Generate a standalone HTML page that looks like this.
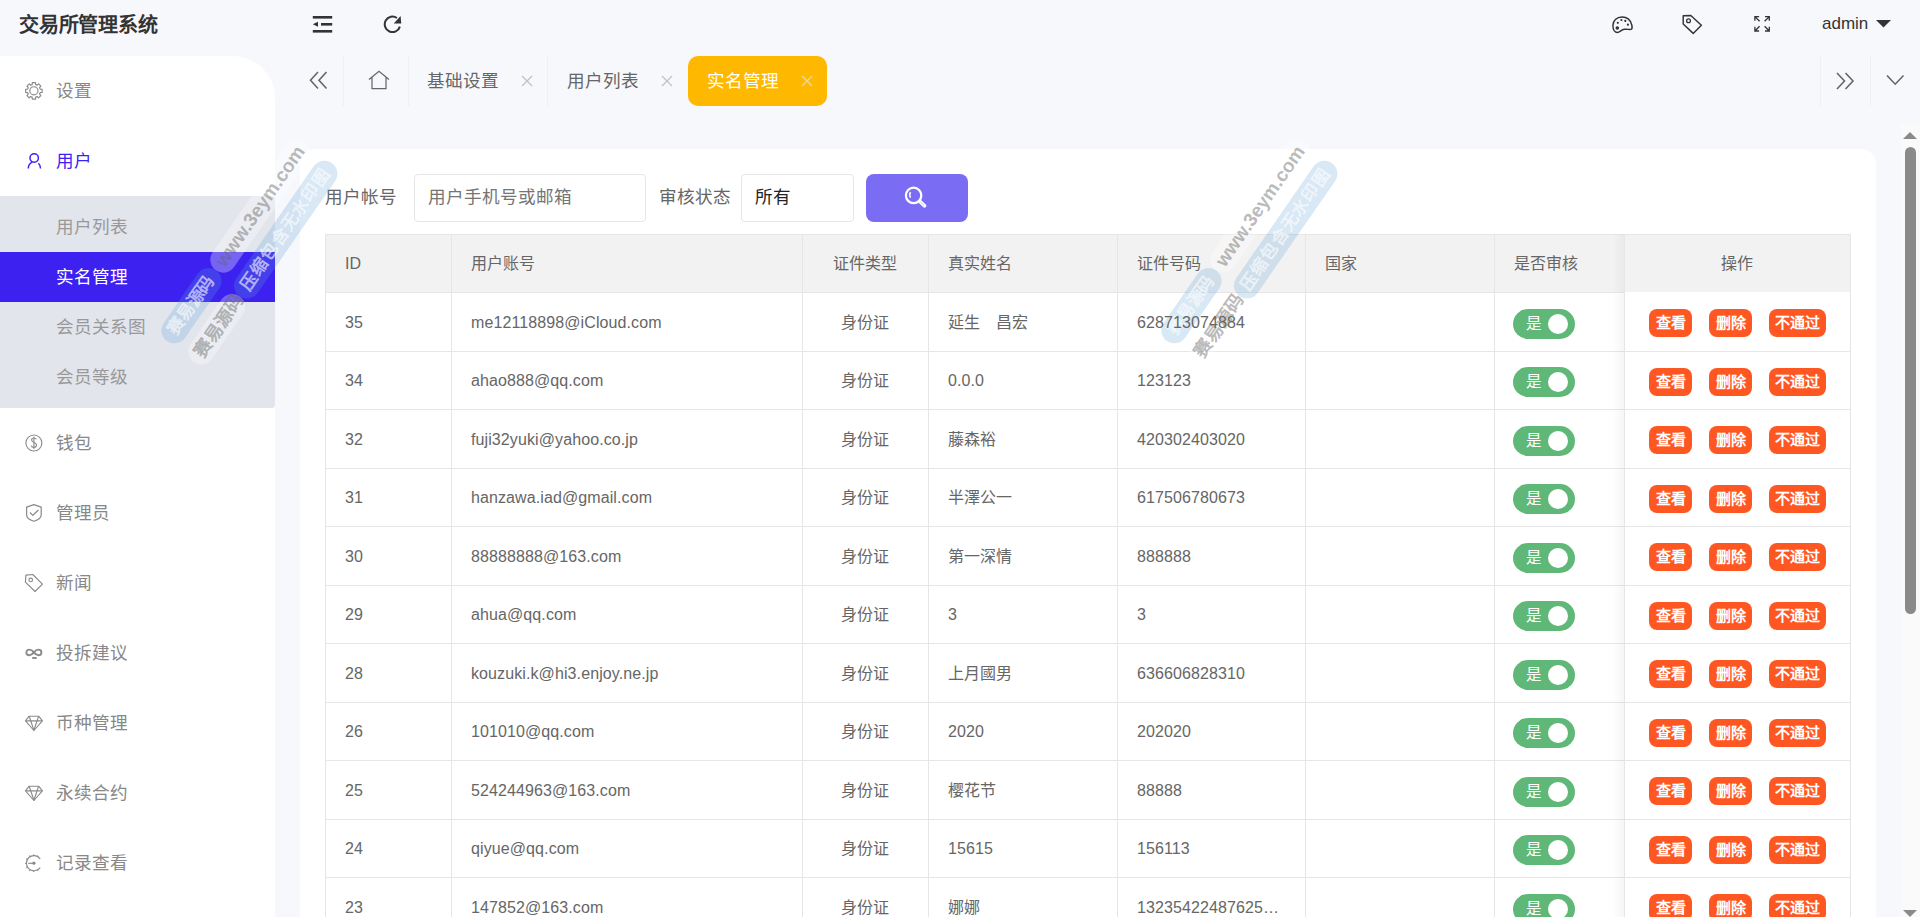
<!DOCTYPE html>
<html lang="zh-CN"><head><meta charset="utf-8"><title>交易所管理系统</title>
<style>
*{margin:0;padding:0;box-sizing:border-box}
html,body{width:1920px;height:917px;overflow:hidden;background:#f7f8fc;font-family:"Liberation Sans",sans-serif;color:#666}
.abs{position:absolute}
#title{position:absolute;left:19px;top:11px;font-size:20px;font-weight:bold;color:#333;line-height:28px;letter-spacing:-0.2px}
#side{position:absolute;left:0;top:56px;width:275px;height:900px;background:#fff;border-top-right-radius:42px}
.mi{position:absolute;left:56px;font-size:17.6px;line-height:24px;color:#888;white-space:nowrap}
.mi.act{color:#3c21f1}
.mico{position:absolute;left:24px;width:20px;height:20px}
#sub{position:absolute;left:0;top:196px;width:275px;height:212px;background:#e3e5ed;border-radius:0 3px 3px 0}
#subsel{position:absolute;left:0;top:252px;width:275px;height:50px;background:#3c21f1}
.si{position:absolute;left:56px;font-size:17.6px;line-height:24px;color:#999;white-space:nowrap}
.si.sel{color:#fff}
.tab{position:absolute;top:56px;height:50px;line-height:50px;font-size:17.6px;color:#666;white-space:nowrap}
.sep{position:absolute;top:56px;width:1px;height:50px;background:#eff0f5}
.x{position:absolute;top:74px;width:14px;height:14px}
#acttab{position:absolute;left:688px;top:56px;width:139px;height:50px;background:#ffb800;border-radius:10px}
#card{position:absolute;left:300px;top:149px;width:1576px;height:800px;background:#fff;border-radius:15px 15px 0 0}
.lbl{position:absolute;top:185px;font-size:17.6px;line-height:24px;color:#666;white-space:nowrap}
.inp{position:absolute;top:174px;height:48px;border:1px solid #e6e6e6;border-radius:4px;background:#fff}
.inp span{position:absolute;left:13px;top:10px;font-size:17.6px;line-height:24px;white-space:nowrap}
#sbtn{position:absolute;left:866px;top:174px;width:102px;height:48px;background:#7b6cf4;border-radius:8px}
.hbg{position:absolute;left:325px;width:1526px;background:#f2f2f2}
.hl{position:absolute;left:325px;width:1526px;height:1px;background:#e6e6e6}
.vl{position:absolute;top:234px;width:1px;height:700px;background:#e6e6e6}
.opshadow{position:absolute;left:1612px;top:234px;width:12px;height:700px;background:linear-gradient(to right,rgba(0,0,0,0),rgba(0,0,0,0.035))}
.th,.td{position:absolute;font-size:16px;letter-spacing:0.1px;line-height:30px;color:#666;white-space:nowrap;overflow:hidden}
.c{text-align:center}
.sw{position:absolute;left:1513px;width:62px;height:30px;border-radius:15px;background:#5fb878}
.sw span{position:absolute;left:13px;top:0;line-height:30px;font-size:15.5px;color:#fff}
.sw i{position:absolute;left:35px;top:5px;width:20px;height:20px;border-radius:50%;background:#fff}
.bt{position:absolute;height:28px;border-radius:8px;background:#ff5722;color:#fff;font-size:15px;font-weight:bold;line-height:28px;text-align:center;white-space:nowrap}
#sbar{position:absolute;left:1901px;top:124px;width:19px;height:800px;background:#fafafa}
#thumb{position:absolute;left:1905px;top:147px;width:11px;height:467px;border-radius:6px;background:#8a8a8a}
.wm{position:absolute;transform-origin:0 50%;white-space:nowrap;font-weight:bold}
.wm{position:absolute;height:26px;transform-origin:0 50%;transform:rotate(-55.3deg);white-space:nowrap;font-weight:bold;display:flex;pointer-events:none}
.wm span{display:block;height:26px;line-height:26px;text-align:center;border-radius:13px;font-size:17px}
.pb{background:rgba(90,160,215,0.24);color:rgba(255,255,255,0.6)}
.pw{background:rgba(255,255,255,0.3);color:rgba(100,100,100,0.45)}

</style></head><body>
<div id="title">交易所管理系统</div>
<!-- header icons -->
<svg class="abs" style="left:312px;top:15px" width="22" height="19" viewBox="0 0 22 19">
 <rect x="0.8" y="1" width="19.4" height="2.6" fill="#333"/>
 <rect x="9" y="8" width="11.2" height="2.6" fill="#333"/>
 <rect x="0.8" y="15" width="19.4" height="2.6" fill="#333"/>
 <path d="M0.8 9.3 L6 6.8 L6 11.8 Z" fill="#333"/>
</svg>
<svg class="abs" style="left:383px;top:15px" width="20" height="20" viewBox="0 0 20 20">
 <path d="M13.95 3.0 A7.75 7.75 0 1 0 16.9 11.6" fill="none" stroke="#333" stroke-width="2"/>
 <path d="M17.6 0.9 L18.25 8.4 L10.75 8.4 Z" fill="#333"/>
</svg>
<!-- right icons -->
<svg class="abs" style="left:1611px;top:15px" width="23" height="20" viewBox="0 0 23 20">
 <path d="M11 2 C5.5 2 1.9 5.8 1.9 10.5 C1.9 15.3 4.3 17.4 6.4 17.4 C8.9 17.4 10 14.6 13.5 14.3 C16.5 14 19.3 15 20.5 14.2 C21.3 13.6 21.2 11.5 20.7 9.7 C19.5 5.2 16 2 11 2 Z" fill="none" stroke="#333" stroke-width="1.45"/>
 <circle cx="6.3" cy="13" r="1.8" fill="#333"/>
 <circle cx="6.8" cy="7.8" r="1.1" fill="#333"/>
 <circle cx="10.4" cy="5.0" r="1.1" fill="#333"/>
 <circle cx="14.3" cy="5.9" r="1.1" fill="#333"/>
 <circle cx="16.9" cy="9.7" r="1.1" fill="#333"/>
</svg>
<svg class="abs" style="left:1681px;top:14px" width="23" height="22" viewBox="0 0 23 22">
 <path d="M2.2 1.7 L9.8 1.5 L20.4 11.3 L12.2 19.4 L2.2 10 Z" fill="none" stroke="#333" stroke-width="1.45" stroke-linejoin="round"/>
 <circle cx="7.5" cy="6.8" r="1.9" fill="none" stroke="#333" stroke-width="1.3"/>
</svg>
<svg class="abs" style="left:1753px;top:15px" width="18" height="18" viewBox="0 0 18 18">
 <g fill="none" stroke="#333" stroke-width="1.3">
 <path d="M1.9 5.8 V1.6 H6.1 M1.9 1.6 L6.6 6.3"/>
 <path d="M12 1.6 H16.3 V5.8 M16.3 1.6 L11.6 6.3"/>
 <path d="M1.9 11.8 V16 H6.1 M1.9 16 L6.6 11.3"/>
 <path d="M16.3 11.8 V16 H12 M16.3 16 L11.6 11.3"/>
 </g>
</svg>
<div class="abs" style="left:1822px;top:12px;font-size:17px;line-height:24px;color:#333">admin</div>
<svg class="abs" style="left:1876px;top:20px" width="16" height="8" viewBox="0 0 16 8"><path d="M0 0 H15 L7.5 7.5Z" fill="#333"/></svg>

<!-- sidebar -->
<div id="side"></div>
<div id="sub"></div>
<div id="subsel"></div>
<div class="mi" style="top:79px">设置</div>
<div class="mi act" style="top:149px">用户</div>
<div class="si" style="top:215px">用户列表</div>
<div class="si sel" style="top:265px">实名管理</div>
<div class="si" style="top:315px">会员关系图</div>
<div class="si" style="top:365px">会员等级</div>
<div class="mi" style="top:431px">钱包</div>
<div class="mi" style="top:501px">管理员</div>
<div class="mi" style="top:571px">新闻</div>
<div class="mi" style="top:641px">投拆建议</div>
<div class="mi" style="top:711px">币种管理</div>
<div class="mi" style="top:781px">永续合约</div>
<div class="mi" style="top:851px">记录查看</div>
<svg class="abs" style="left:20px;top:76px" width="28" height="28" viewBox="0 0 28 28"><g fill="none" stroke="#8a8a8a" stroke-width="1.15" stroke-linejoin="round">
<path d="M11.41 8.84 L12.17 8.59 L12.31 6.60 L15.49 6.60 L15.63 8.59 L16.39 8.84 L17.10 9.19 L18.61 7.90 L20.85 10.14 L19.56 11.65 L19.91 12.36 L20.16 13.12 L22.15 13.26 L22.15 16.44 L20.16 16.58 L19.91 17.34 L19.56 18.05 L20.85 19.56 L18.61 21.80 L17.10 20.51 L16.39 20.86 L15.63 21.11 L15.49 23.10 L12.31 23.10 L12.17 21.11 L11.41 20.86 L10.70 20.51 L9.19 21.80 L6.95 19.56 L8.24 18.05 L7.89 17.34 L7.64 16.58 L5.65 16.44 L5.65 13.26 L7.64 13.12 L7.89 12.36 L8.24 11.65 L6.95 10.14 L9.19 7.90 L10.70 9.19 Z"/>
<circle cx="13.9" cy="14.8" r="4.1"/></g></svg>
<svg class="abs" style="left:20px;top:147px" width="28" height="28" viewBox="0 0 28 28"><g fill="none" stroke="#3c21f1" stroke-width="1.5">
<circle cx="14.2" cy="11" r="4.2"/>
<path d="M8.3 21.6 C8.3 18.5 9.8 16.2 12.2 15.1"/>
<path d="M18.4 16.3 C19.8 17.5 20.5 19.3 20.5 21.6"/></g></svg>
<svg class="abs" style="left:20px;top:429px" width="28" height="28" viewBox="0 0 28 28"><g fill="none" stroke="#8a8a8a" stroke-width="1.1">
<circle cx="13.9" cy="14" r="8"/>
<path d="M16.4 10.4 C16 9.4 15.1 9 14 9 C12.6 9 11.6 9.8 11.6 11 C11.6 12.4 12.8 12.9 14 13.4 C15.4 13.9 16.5 14.6 16.5 16.1 C16.5 17.5 15.3 18.4 13.9 18.4 C12.5 18.4 11.5 17.6 11.2 16.6"/>
<path d="M13.9 7.8 V20"/></g></svg>
<svg class="abs" style="left:20px;top:499px" width="28" height="28" viewBox="0 0 28 28"><g fill="none" stroke="#8a8a8a" stroke-width="1.2" stroke-linejoin="round">
<path d="M13.9 5.6 L21.2 8.1 V15.8 C21.2 19 17.5 21.2 13.9 22.3 C10.3 21.2 6.6 19 6.6 15.8 V8.1 Z"/>
<path d="M10 13.5 L12.8 16.3 L18.5 11"/></g></svg>
<svg class="abs" style="left:20px;top:569px" width="28" height="28" viewBox="0 0 28 28"><g fill="none" stroke="#8a8a8a" stroke-width="1.15" stroke-linejoin="round">
<path d="M5.9 6.1 L12.8 5.5 L22.4 15.1 L15 22.5 L5.4 13.2 Z"/>
<circle cx="10.7" cy="10.9" r="1.8"/></g></svg>
<svg class="abs" style="left:20px;top:639px" width="28" height="28" viewBox="0 0 28 28"><g fill="none" stroke="#8a8a8a" stroke-width="1.9">
<path d="M13.9 13.4 C12.5 11.6 11.3 10.6 9.3 10.6 C7.6 10.6 6.4 11.8 6.4 13.4 C6.4 15 7.6 16.2 9.3 16.2 C11.3 16.2 12.5 15.2 13.9 13.4 C15.3 11.6 16.5 10.6 18.5 10.6 C20.2 10.6 21.4 11.8 21.4 13.4 C21.4 15 20.2 16.2 18.5 16.2 C16.5 16.2 15.3 15.2 13.9 13.4 Z"/>
<path d="M12.2 19 H16.7"/></g></svg>
<svg class="abs" style="left:20px;top:709px" width="28" height="28" viewBox="0 0 28 28"><g fill="none" stroke="#8a8a8a" stroke-width="1.1" stroke-linejoin="round">
<path d="M8.9 7.3 H18.9 L22.4 11.9 L13.9 21.5 L5.5 11.9 Z"/>
<path d="M5.5 11.9 H22.4 M9.2 7.3 L13.9 21.2 L18.6 7.3"/></g></svg>
<svg class="abs" style="left:20px;top:779px" width="28" height="28" viewBox="0 0 28 28"><g fill="none" stroke="#8a8a8a" stroke-width="1.1" stroke-linejoin="round">
<path d="M8.9 7.3 H18.9 L22.4 11.9 L13.9 21.5 L5.5 11.9 Z"/>
<path d="M5.5 11.9 H22.4 M9.2 7.3 L13.9 21.2 L18.6 7.3"/></g></svg>
<svg class="abs" style="left:20px;top:849px" width="28" height="28" viewBox="0 0 28 28"><g fill="none" stroke="#8a8a8a" stroke-width="1.15">
<path d="M20.2 9.8 A7.6 7.6 0 1 0 20.2 18.6"/>
<path d="M13.6 5.6 V7 M9.4 6.5 L10 7.6 M6.3 9.6 L7.3 10.2 M5.2 14.3 H6.6 M6.3 18.8 L7.3 18.2 M9.4 21.9 L10 20.8 M13.6 22.8 V21.4 M17.9 21.8 L17.3 20.8 M18 6.6 L17.4 7.6"/>
<path d="M8.2 14.3 H13.2"/></g>
<circle cx="13.9" cy="14.2" r="1.6" fill="#8a8a8a"/></svg>


<!-- tabs -->
<svg class="abs" style="left:309px;top:71px" width="19" height="19" viewBox="0 0 19 19">
 <path d="M9 1 L1.5 9.2 L9 17.5 M17.5 1 L10 9.2 L17.5 17.5" fill="none" stroke="#666" stroke-width="1.6"/>
</svg>
<div class="sep" style="left:343px"></div>
<svg class="abs" style="left:368px;top:70px" width="22" height="20" viewBox="0 0 22 20">
 <path d="M1 9.5 L11 1.2 L21 9.5 M4 7.5 V18.5 H18 V7.5" fill="none" stroke="#666" stroke-width="1.25"/>
</svg>
<div class="sep" style="left:408px"></div>
<div class="tab" style="left:427px">基础设置</div>
<svg class="x" style="left:520px" viewBox="0 0 14 14"><path d="M2 2 L12 12 M12 2 L2 12" stroke="#c2c2c2" stroke-width="1.3"/></svg>
<div class="sep" style="left:547px"></div>
<div class="tab" style="left:567px">用户列表</div>
<svg class="x" style="left:660px" viewBox="0 0 14 14"><path d="M2 2 L12 12 M12 2 L2 12" stroke="#c2c2c2" stroke-width="1.3"/></svg>
<div id="acttab"></div>
<div class="tab" style="left:707px;color:#fff">实名管理</div>
<svg class="x" style="left:800px" viewBox="0 0 14 14"><path d="M2 2 L12 12 M12 2 L2 12" stroke="#e8d9a8" stroke-width="1.3"/></svg>
<div class="sep" style="left:1820px"></div>
<svg class="abs" style="left:1836px;top:72px" width="19" height="18" viewBox="0 0 19 18">
 <path d="M1 1 L8.5 9 L1 17 M9.5 1 L17 9 L9.5 17" fill="none" stroke="#666" stroke-width="1.6"/>
</svg>
<div class="sep" style="left:1870px"></div>
<svg class="abs" style="left:1886px;top:74px" width="19" height="12" viewBox="0 0 19 12">
 <path d="M1 1.5 L9.2 10.2 L17.5 1.5" fill="none" stroke="#666" stroke-width="1.6"/>
</svg>

<!-- card -->
<div id="card"></div>
<div class="lbl" style="left:325px">用户帐号</div>
<div class="inp" style="left:414px;width:232px"><span style="color:#757575">用户手机号或邮箱</span></div>
<div class="lbl" style="left:659px">审核状态</div>
<div class="inp" style="left:741px;width:113px"><span style="color:#222">所有</span></div>
<div id="sbtn"></div>
<svg class="abs" style="left:902px;top:184px" width="26" height="26" viewBox="0 0 26 26">
 <circle cx="11.6" cy="11.4" r="7.7" fill="none" stroke="#fff" stroke-width="2.3"/>
 <path d="M8.6 8.3 A4.6 4.6 0 0 0 8.6 13.6" fill="none" stroke="#fff" stroke-width="1.5"/>
 <path d="M17.8 17.4 L22.6 21.8" stroke="#fff" stroke-width="3.6" stroke-linecap="round"/>
 <path d="M18.6 18.2 L21.9 21.1" stroke="#c9c2fa" stroke-width="0.9" stroke-linecap="round"/>
</svg>
<div class="hbg" style="top:234px;height:58.4px"></div>
<div class="hl" style="top:234.0px"></div>
<div class="hl" style="top:292.4px;width:1299px"></div>
<div class="hl" style="top:350.9px"></div>
<div class="hl" style="top:409.4px"></div>
<div class="hl" style="top:467.9px"></div>
<div class="hl" style="top:526.4px"></div>
<div class="hl" style="top:584.9px"></div>
<div class="hl" style="top:643.4px"></div>
<div class="hl" style="top:701.9px"></div>
<div class="hl" style="top:760.4px"></div>
<div class="hl" style="top:818.9px"></div>
<div class="hl" style="top:877.4px"></div>
<div class="hl" style="top:935.9px"></div>
<div class="vl" style="left:325px"></div>
<div class="vl" style="left:451px"></div>
<div class="vl" style="left:802px"></div>
<div class="vl" style="left:928px"></div>
<div class="vl" style="left:1117px"></div>
<div class="vl" style="left:1305px"></div>
<div class="vl" style="left:1494px"></div>
<div class="vl" style="left:1624px"></div>
<div class="vl" style="left:1850px"></div>
<div class="opshadow"></div>
<div class="wm" style="left:167px;top:328px"><span class="pb" style="width:86px">赛易源码</span><span class="pw" style="width:156px;font-size:19px;font-family:'Liberation Sans',sans-serif">www.3eym.com</span></div>
<div class="wm" style="left:194px;top:349px"><span class="pw" style="width:80px;padding-left:8px;font-size:18px">赛易源码</span><span class="pb" style="width:162px;letter-spacing:1px">压缩包含无水印图</span></div>
<div class="wm" style="left:1167px;top:328px"><span class="pb" style="width:86px">赛易源码</span><span class="pw" style="width:156px;font-size:19px;font-family:'Liberation Sans',sans-serif">www.3eym.com</span></div>
<div class="wm" style="left:1194px;top:349px"><span class="pw" style="width:80px;padding-left:8px;font-size:18px">赛易源码</span><span class="pb" style="width:162px;letter-spacing:1px">压缩包含无水印图</span></div>
<div class="th" style="left:345px;width:106px;top:249.2px">ID</div>
<div class="th" style="left:471px;width:331px;top:249.2px">用户账号</div>
<div class="th c" style="left:802px;width:126px;top:249.2px">证件类型</div>
<div class="th" style="left:948px;width:169px;top:249.2px">真实姓名</div>
<div class="th" style="left:1137px;width:168px;top:249.2px">证件号码</div>
<div class="th" style="left:1325px;width:169px;top:249.2px">国家</div>
<div class="th" style="left:1514px;width:110px;top:249.2px">是否审核</div>
<div class="th c" style="left:1624px;width:226px;top:249.2px">操作</div>
<div class="td" style="left:345px;width:106px;top:307.6px">35</div>
<div class="td" style="left:471px;width:331px;top:307.6px">me12118898@iCloud.com</div>
<div class="td c" style="left:802px;width:126px;top:307.6px">身份证</div>
<div class="td" style="left:948px;width:169px;top:307.6px">延生　昌宏</div>
<div class="td" style="left:1137px;width:168px;top:307.6px">628713074884</div>
<div class="sw" style="top:308.5px"><span>是</span><i></i></div>
<div class="bt" style="left:1649px;width:43px;top:309.3px">查看</div>
<div class="bt" style="left:1709px;width:43px;top:309.3px">删除</div>
<div class="bt" style="left:1769px;width:57px;top:309.3px">不通过</div>
<div class="td" style="left:345px;width:106px;top:366.1px">34</div>
<div class="td" style="left:471px;width:331px;top:366.1px">ahao888@qq.com</div>
<div class="td c" style="left:802px;width:126px;top:366.1px">身份证</div>
<div class="td" style="left:948px;width:169px;top:366.1px">0.0.0</div>
<div class="td" style="left:1137px;width:168px;top:366.1px">123123</div>
<div class="sw" style="top:367.0px"><span>是</span><i></i></div>
<div class="bt" style="left:1649px;width:43px;top:367.8px">查看</div>
<div class="bt" style="left:1709px;width:43px;top:367.8px">删除</div>
<div class="bt" style="left:1769px;width:57px;top:367.8px">不通过</div>
<div class="td" style="left:345px;width:106px;top:424.6px">32</div>
<div class="td" style="left:471px;width:331px;top:424.6px">fuji32yuki@yahoo.co.jp</div>
<div class="td c" style="left:802px;width:126px;top:424.6px">身份证</div>
<div class="td" style="left:948px;width:169px;top:424.6px">藤森裕</div>
<div class="td" style="left:1137px;width:168px;top:424.6px">420302403020</div>
<div class="sw" style="top:425.5px"><span>是</span><i></i></div>
<div class="bt" style="left:1649px;width:43px;top:426.3px">查看</div>
<div class="bt" style="left:1709px;width:43px;top:426.3px">删除</div>
<div class="bt" style="left:1769px;width:57px;top:426.3px">不通过</div>
<div class="td" style="left:345px;width:106px;top:483.1px">31</div>
<div class="td" style="left:471px;width:331px;top:483.1px">hanzawa.iad@gmail.com</div>
<div class="td c" style="left:802px;width:126px;top:483.1px">身份证</div>
<div class="td" style="left:948px;width:169px;top:483.1px">半澤公一</div>
<div class="td" style="left:1137px;width:168px;top:483.1px">617506780673</div>
<div class="sw" style="top:484.0px"><span>是</span><i></i></div>
<div class="bt" style="left:1649px;width:43px;top:484.8px">查看</div>
<div class="bt" style="left:1709px;width:43px;top:484.8px">删除</div>
<div class="bt" style="left:1769px;width:57px;top:484.8px">不通过</div>
<div class="td" style="left:345px;width:106px;top:541.6px">30</div>
<div class="td" style="left:471px;width:331px;top:541.6px">88888888@163.com</div>
<div class="td c" style="left:802px;width:126px;top:541.6px">身份证</div>
<div class="td" style="left:948px;width:169px;top:541.6px">第一深情</div>
<div class="td" style="left:1137px;width:168px;top:541.6px">888888</div>
<div class="sw" style="top:542.5px"><span>是</span><i></i></div>
<div class="bt" style="left:1649px;width:43px;top:543.4px">查看</div>
<div class="bt" style="left:1709px;width:43px;top:543.4px">删除</div>
<div class="bt" style="left:1769px;width:57px;top:543.4px">不通过</div>
<div class="td" style="left:345px;width:106px;top:600.1px">29</div>
<div class="td" style="left:471px;width:331px;top:600.1px">ahua@qq.com</div>
<div class="td c" style="left:802px;width:126px;top:600.1px">身份证</div>
<div class="td" style="left:948px;width:169px;top:600.1px">3</div>
<div class="td" style="left:1137px;width:168px;top:600.1px">3</div>
<div class="sw" style="top:601.0px"><span>是</span><i></i></div>
<div class="bt" style="left:1649px;width:43px;top:601.9px">查看</div>
<div class="bt" style="left:1709px;width:43px;top:601.9px">删除</div>
<div class="bt" style="left:1769px;width:57px;top:601.9px">不通过</div>
<div class="td" style="left:345px;width:106px;top:658.6px">28</div>
<div class="td" style="left:471px;width:331px;top:658.6px">kouzuki.k@hi3.enjoy.ne.jp</div>
<div class="td c" style="left:802px;width:126px;top:658.6px">身份证</div>
<div class="td" style="left:948px;width:169px;top:658.6px">上月國男</div>
<div class="td" style="left:1137px;width:168px;top:658.6px">636606828310</div>
<div class="sw" style="top:659.5px"><span>是</span><i></i></div>
<div class="bt" style="left:1649px;width:43px;top:660.4px">查看</div>
<div class="bt" style="left:1709px;width:43px;top:660.4px">删除</div>
<div class="bt" style="left:1769px;width:57px;top:660.4px">不通过</div>
<div class="td" style="left:345px;width:106px;top:717.1px">26</div>
<div class="td" style="left:471px;width:331px;top:717.1px">101010@qq.com</div>
<div class="td c" style="left:802px;width:126px;top:717.1px">身份证</div>
<div class="td" style="left:948px;width:169px;top:717.1px">2020</div>
<div class="td" style="left:1137px;width:168px;top:717.1px">202020</div>
<div class="sw" style="top:718.0px"><span>是</span><i></i></div>
<div class="bt" style="left:1649px;width:43px;top:718.9px">查看</div>
<div class="bt" style="left:1709px;width:43px;top:718.9px">删除</div>
<div class="bt" style="left:1769px;width:57px;top:718.9px">不通过</div>
<div class="td" style="left:345px;width:106px;top:775.6px">25</div>
<div class="td" style="left:471px;width:331px;top:775.6px">524244963@163.com</div>
<div class="td c" style="left:802px;width:126px;top:775.6px">身份证</div>
<div class="td" style="left:948px;width:169px;top:775.6px">樱花节</div>
<div class="td" style="left:1137px;width:168px;top:775.6px">88888</div>
<div class="sw" style="top:776.5px"><span>是</span><i></i></div>
<div class="bt" style="left:1649px;width:43px;top:777.4px">查看</div>
<div class="bt" style="left:1709px;width:43px;top:777.4px">删除</div>
<div class="bt" style="left:1769px;width:57px;top:777.4px">不通过</div>
<div class="td" style="left:345px;width:106px;top:834.1px">24</div>
<div class="td" style="left:471px;width:331px;top:834.1px">qiyue@qq.com</div>
<div class="td c" style="left:802px;width:126px;top:834.1px">身份证</div>
<div class="td" style="left:948px;width:169px;top:834.1px">15615</div>
<div class="td" style="left:1137px;width:168px;top:834.1px">156113</div>
<div class="sw" style="top:835.0px"><span>是</span><i></i></div>
<div class="bt" style="left:1649px;width:43px;top:835.9px">查看</div>
<div class="bt" style="left:1709px;width:43px;top:835.9px">删除</div>
<div class="bt" style="left:1769px;width:57px;top:835.9px">不通过</div>
<div class="td" style="left:345px;width:106px;top:892.6px">23</div>
<div class="td" style="left:471px;width:331px;top:892.6px">147852@163.com</div>
<div class="td c" style="left:802px;width:126px;top:892.6px">身份证</div>
<div class="td" style="left:948px;width:169px;top:892.6px">娜娜</div>
<div class="td" style="left:1137px;width:168px;top:892.6px">13235422487625…</div>
<div class="sw" style="top:893.5px"><span>是</span><i></i></div>
<div class="bt" style="left:1649px;width:43px;top:894.4px">查看</div>
<div class="bt" style="left:1709px;width:43px;top:894.4px">删除</div>
<div class="bt" style="left:1769px;width:57px;top:894.4px">不通过</div>

<!-- scrollbar -->
<div id="sbar"></div>
<svg class="abs" style="left:1903px;top:131px" width="14" height="8" viewBox="0 0 14 8"><path d="M0 8 L7 1 L14 8Z" fill="#8a8a8a"/></svg>
<div id="thumb"></div>
<svg class="abs" style="left:1903px;top:910px" width="14" height="8" viewBox="0 0 14 8"><path d="M0 0 L14 0 L7 7Z" fill="#8a8a8a"/></svg>
</body></html>
